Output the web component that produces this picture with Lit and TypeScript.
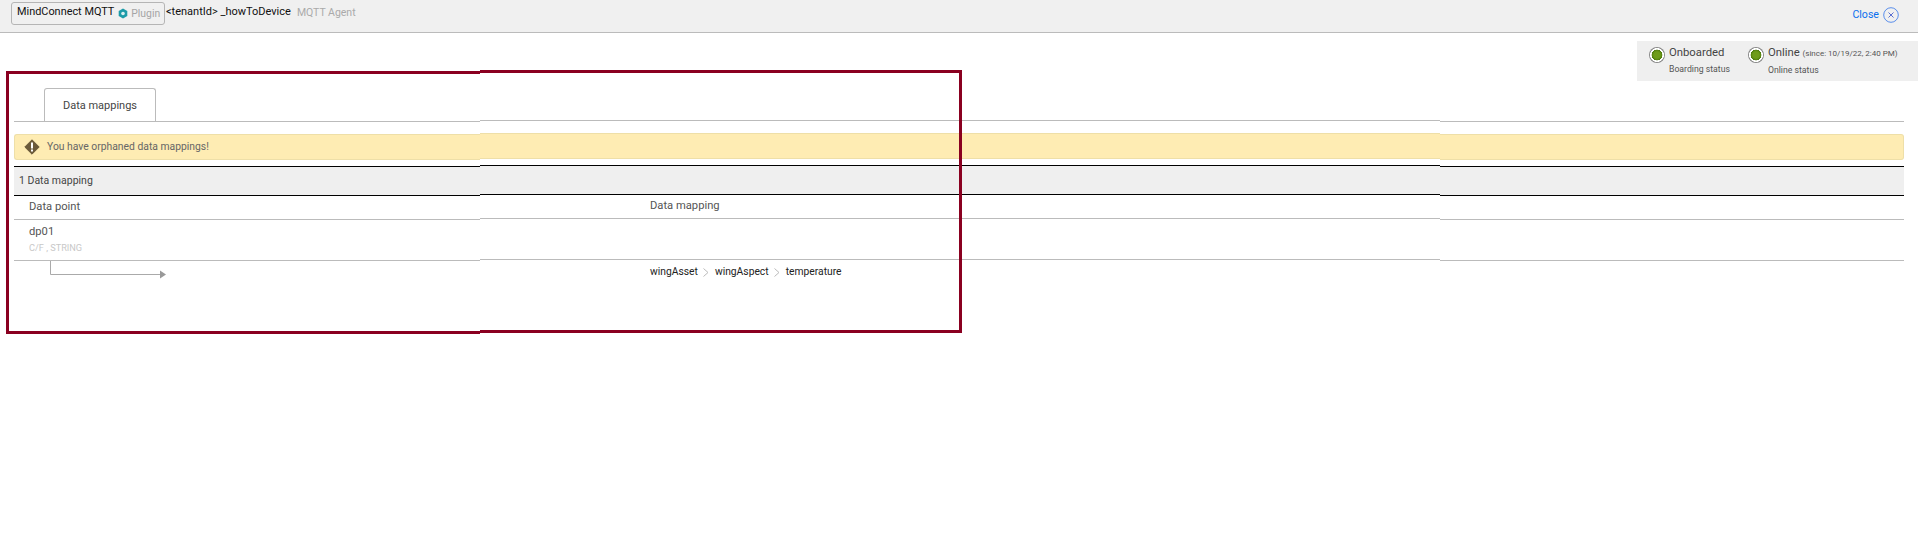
import { LitElement, html, css } from "lit";
import { customElement } from "lit/decorators.js";

type Strip = "left" | "mid" | "right";

@customElement("app-root")
export class AppRoot extends LitElement {
  static styles = css`
    :host { display: block; width: 1918px; height: 550px; overflow: hidden; background: #fff;
      font-family: Roboto, "Liberation Sans", sans-serif; font-size: 10.5px; color: #444; }
    .head { box-sizing: border-box; height: 33px; background: #f0f0f0; border-bottom: 1px solid #bbb; display: flex; align-items: flex-start; padding: 2px 19px 0 11px; }
    .plugin { box-sizing: border-box; width: 154px; height: 23px; border: 1px solid #b5b5b5; border-radius: 3px; padding: 0 5px; display: flex; align-items: flex-start; gap: 3px; line-height: 17px; white-space: nowrap; }
    .plugin b { font-weight: 400; font-size: 10.9px; color: #111; margin-right: 1px; }
    .plugin span { color: #a5a5a5; margin-top: 2px; font-size: 10.4px; }
    .plugin svg { margin-top: 5px; flex: none; }
    .device { color: #111; line-height: 20px; margin-left: 1px; font-size: 11px; }
    .agent { color: #aaa; margin: 1px 0 0 6px; line-height: 20px; }
    .close { margin-left: auto; color: #0a6fee; display: flex; align-items: center; gap: 4px; line-height: 20px; margin-top: 3px; font-size: 10.6px; }
    .strips { display: grid; grid-template-columns: 480px 960px 478px; }
    .strip { position: relative; height: 320px; box-sizing: border-box; }
    .strip.left { padding-top: 55px; }
    .strip.mid { padding-top: 54px; }
    .strip.right { padding-top: 8px; }
    .strip.left .rows { margin-left: 14px; }
    .strip.right .rows { margin: 7px 14px 0 0; }
    .frame { position: absolute; border: 3px solid #8a0020; pointer-events: none; box-sizing: border-box; }
    .left .frame { left: 6px; top: 38px; right: 0; height: 263px; border-right: 0; }
    .mid .frame { left: 0; top: 37px; width: 482px; height: 263px; border-left: 0; }
    .tabs { height: 33px; border-bottom: 1px solid #bbb; display: flex; align-items: flex-end; }
    .tab { margin-left: 30px; width: 112px; height: 33px; box-sizing: border-box; border: 1px solid #bbb; border-bottom: 0; border-radius: 3px 3px 0 0; display: flex; align-items: center; justify-content: center; color: #444; font-size: 11px; }
    .warn { margin-top: 12px; height: 24px; background: #feecb3; border-top: 1px solid #eedfa8; border-bottom: 1px solid #eedfa8; display: flex; align-items: center; color: #666; font-size: 10.35px; }
    .left .warn { border-left: 1px solid #eedfa8; border-radius: 3px 0 0 3px; padding-left: 9px; gap: 7px; }
    .warn span { margin-bottom: 1px; }
    .right .warn { border-right: 1px solid #eedfa8; border-radius: 0 3px 3px 0; }
    .count { box-sizing: content-box; margin-top: 6px; height: 27px; padding: 0 0 1px 5px; background: #efefef; border-top: 1px solid #000; border-bottom: 1px solid #000; display: flex; align-items: center; color: #444; }
    .cols { height: 21px; padding: 0 0 2px 15px; border-bottom: 1px solid #bbb; color: #555; display: flex; align-items: center; font-size: 11.2px; }
    .mid .cols { padding-left: 170px; }
    .point { box-sizing: border-box; height: 41px; border-bottom: 1px solid #bbb; padding: 3px 0 0 15px; color: #555; line-height: 18px; font-size: 11.2px; }
    .point small { display: block; font-size: 9.2px; color: #c8c8c8; line-height: 14px; }
    .arrow { display: block; margin-left: 36px; }
    .crumbs { display: flex; align-items: center; gap: 5.5px; padding: 4px 0 0 170px; color: #222; line-height: 16px; font-size: 10.3px; }
    .status { width: 281px; height: 40px; margin-left: auto; background: #efefef; display: flex; padding: 4px 0 0 12px; box-sizing: border-box; gap: 18px; }
    .st { display: flex; gap: 4px; }
    .st i { display: block; flex: none; width: 16px; height: 16px; border-radius: 50%; background: radial-gradient(circle closest-side at 50% 50%, #6f9c1a 0 40%, #4f7c0e 66%, #fff 70% 84%, #888 90%); margin-top: 2px; }
    .st .t { font-size: 11.3px; line-height: 16px; color: #444; white-space: nowrap; }
    .st .t small { font-size: 8px; color: #555; }
    .st .s { font-size: 8.7px; line-height: 17px; color: #555; white-space: nowrap; }
  `;

  private chev() {
    return html`<svg width="6" height="9" viewBox="0 0 6 9"><path d="M.5.500l4.500 4-4.500 4" fill="none" stroke="#bbb"/></svg>`;
  }

  private rows(k: Strip) {
    return html`<div class="rows">
      <div class="tabs">${k === "left" ? html`<div class="tab">Data mappings</div>` : ""}</div>
      <div class="warn">${k === "left"
        ? html`<svg width="16" height="16" viewBox="0 0 16 16"><path d="M8 .8L15.200 8 8 15.200.8 8z" fill="#6b5a3a" stroke="#6b5a3a" stroke-linejoin="round"/><rect x="7" y="3.500" width="2" height="6" fill="#fff"/><rect x="7" y="10.500" width="2" height="2" fill="#fff"/></svg><span>You have orphaned data mappings!</span>`
        : ""}</div>
      <div class="count">${k === "left" ? "1 Data mapping" : ""}</div>
      <div class="cols">${k === "left" ? "Data point" : k === "mid" ? "Data mapping" : ""}</div>
      <div class="point">${k === "left" ? html`dp01<small>C/F , STRING</small>` : ""}</div>
      ${k === "left"
        ? html`<svg class="arrow" width="130" height="20" viewBox="0 0 130 20"><path d="M.5 0V13.500H111" fill="none" stroke="#aaa"/><path d="M110 9.500l6 4-6 4z" fill="#999"/></svg>`
        : k === "mid"
        ? html`<div class="crumbs"><span>wingAsset</span>${this.chev()}<span>wingAspect</span>${this.chev()}<span>temperature</span></div>`
        : ""}
    </div>`;
  }

  private status() {
    return html`<div class="status">
      <div class="st"><i></i><div><div class="t">Onboarded</div><div class="s">Boarding status</div></div></div>
      <div class="st"><i></i><div><div class="t">Online <small>(since: 10/19/22, 2:40 PM)</small></div><div class="s">Online status</div></div></div>
    </div>`;
  }

  render() {
    const strips: Strip[] = ["left", "mid", "right"];
    return html`
      <div class="head">
        <div class="plugin"><b>MindConnect MQTT</b>
          <svg width="10" height="11" viewBox="0 0 10 11"><path d="M5 .5l4.300 2.500v5L5 10.500.7 8V3z" fill="#1c9ba8"/><circle cx="5" cy="5.500" r="1.800" fill="#d8eef0"/></svg>
          <span>Plugin</span></div>
        <div class="device">&lt;tenantId&gt; _howToDevice</div>
        <div class="agent">MQTT Agent</div>
        <div class="close">Close
          <svg width="16" height="16" viewBox="0 0 16 16"><circle cx="8" cy="8" r="7.300" fill="none" stroke="#4a83ea" stroke-width=".9"/><path d="M5.500 5.500l5 5m0-5l-5 5" stroke="#5a6fd0" fill="none"/></svg>
        </div>
      </div>
      <div class="strips">
        ${strips.map((k) => html`<div class="strip ${k}">
          ${k === "right" ? this.status() : ""}
          ${this.rows(k)}
          ${k !== "right" ? html`<div class="frame"></div>` : ""}
        </div>`)}
      </div>`;
  }
}
